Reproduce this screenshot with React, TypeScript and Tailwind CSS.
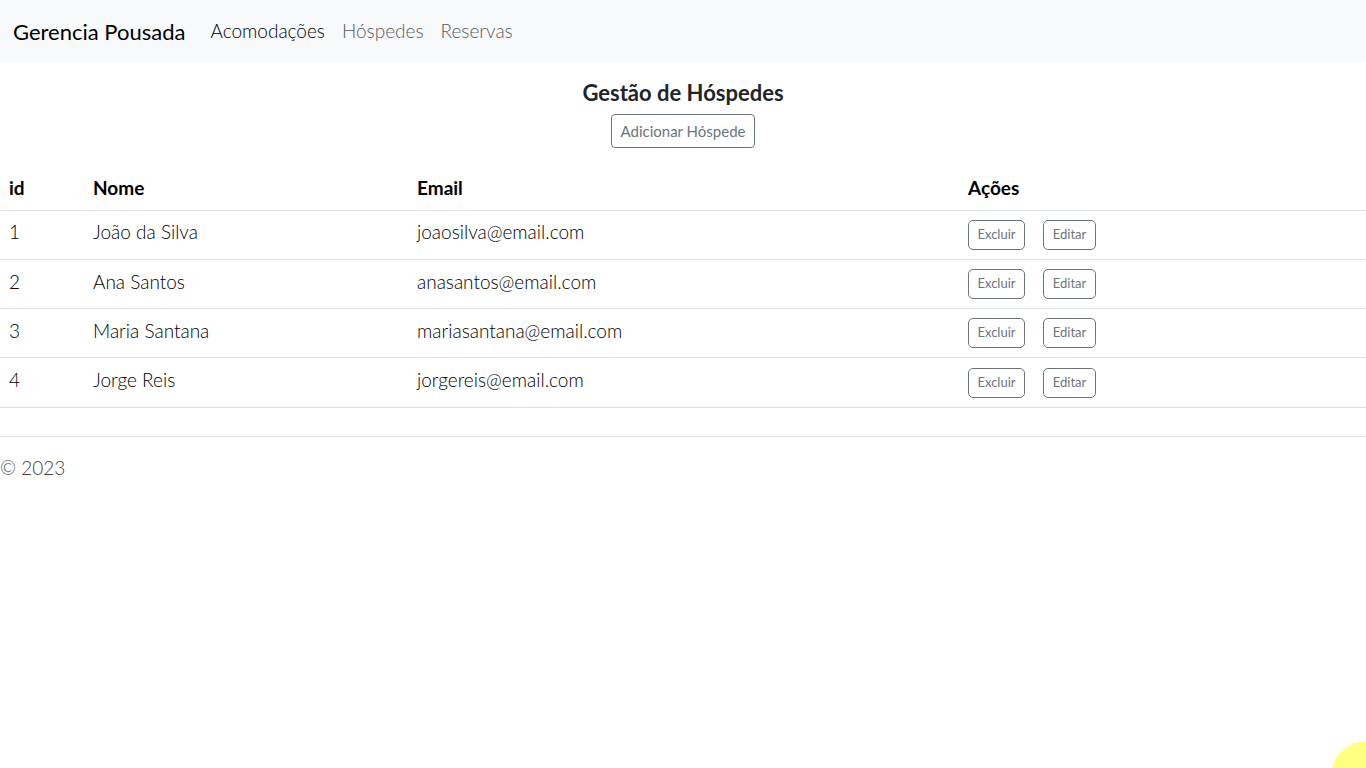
const guests = [
  { id: 1, nome: "João da Silva", email: "joaosilva@email.com" },
  { id: 2, nome: "Ana Santos", email: "anasantos@email.com" },
  { id: 3, nome: "Maria Santana", email: "mariasantana@email.com" },
  { id: 4, nome: "Jorge Reis", email: "jorgereis@email.com" },
];

export default function App() {
  return (
    <div className="relative min-h-[768px] bg-white font-['Lato','Noto_Sans',sans-serif] text-[#212529]">
      <nav className="flex h-[62px] items-center bg-[#f8f9fa] pl-[13px]">
        <span className="mr-[25px] text-[22px] font-normal text-black">Gerencia Pousada</span>
        <div className="flex gap-[17px] text-[19px] font-light">
          <a className="text-black">Acomodações</a>
          <a className="text-[#5a5a5a]">Hóspedes</a>
          <a className="text-[#5a5a5a]">Reservas</a>
        </div>
      </nav>

      <main>
        <div className="flex flex-col items-center pt-[17px]">
          <h2 className="text-[22px] font-bold leading-[28px]">Gestão de Hóspedes</h2>
          <button
            type="button"
            className="mt-[7px] h-[34px] rounded-[4px] border border-[#6c757d] px-[9px] text-[15px] font-normal text-[#6c757d]"
          >
            Adicionar Hóspede
          </button>
        </div>

        <table className="mt-[18px] w-full table-fixed border-collapse text-left text-[19px] text-black">
          <colgroup>
            <col className="w-[84px]" />
            <col className="w-[324px]" />
            <col className="w-[551px]" />
            <col />
          </colgroup>
          <thead>
            <tr className="h-[44px] border-b border-[#dee2e6]">
              <th className="px-[9px] font-bold">id</th>
              <th className="px-[9px] font-bold">Nome</th>
              <th className="px-[9px] font-bold">Email</th>
              <th className="px-[9px] font-bold">Ações</th>
            </tr>
          </thead>
          <tbody className="font-light">
            {guests.map((g) => (
              <tr key={g.id} className="h-[49.3px] border-b border-[#dee2e6]">
                <td className="px-[9px] pb-[4px]">{g.id}</td>
                <td className="px-[9px] pb-[4px]">{g.nome}</td>
                <td className="px-[9px] pb-[4px]">{g.email}</td>
                <td className="px-[9px]">
                  <div className="flex gap-[18px]">
                    <button
                      type="button"
                      className="h-[30px] w-[57px] rounded-[5px] border border-[#6c757d] text-[13px] font-normal text-[#6c757d]"
                    >
                      Excluir
                    </button>
                    <button
                      type="button"
                      className="h-[30px] w-[53px] rounded-[5px] border border-[#6c757d] text-[13px] font-normal text-[#6c757d]"
                    >
                      Editar
                    </button>
                  </div>
                </td>
              </tr>
            ))}
          </tbody>
        </table>
      </main>

      <footer className="mt-[28px] border-t border-[#dee2e6] pt-[17px] text-[19px] font-light text-[#444]">
        © 2023
      </footer>

      <div className="absolute left-[1332px] top-[742px] h-[64px] w-[64px] rounded-full bg-[#ffff80]" />
    </div>
  );
}
